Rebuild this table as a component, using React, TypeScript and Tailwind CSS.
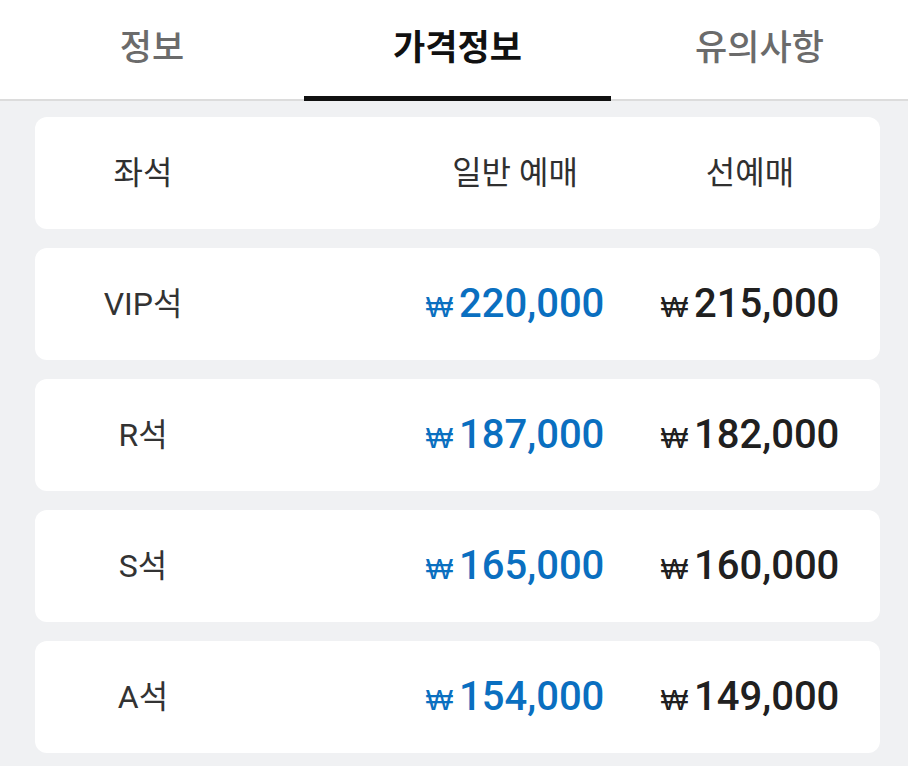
import React from "react";

const rows = [
  { seat: "VIP석", normal: "220,000", pre: "215,000" },
  { seat: "R석", normal: "187,000", pre: "182,000" },
  { seat: "S석", normal: "165,000", pre: "160,000" },
  { seat: "A석", normal: "154,000", pre: "149,000" },
];

const font = { fontFamily: '"Roboto", "Noto Sans CJK KR", sans-serif' };

function Price({ value, blue }: { value: string; blue?: boolean }) {
  return (
    <span
      className={`flex items-baseline justify-center ${blue ? "text-[#0a6fc0]" : "text-[#202020]"}`}
    >
      <span
        className="text-[29px] font-light mr-[6px]"
        style={{ fontFamily: '"DejaVu Sans", "Liberation Sans", sans-serif' }}
      >
        ₩
      </span>
      <span className="text-[40px] font-medium">{value}</span>
    </span>
  );
}

export default function App() {
  return (
    <div className="w-[908px] h-[766px] bg-[#f0f1f3] overflow-hidden" style={font}>
      <div className="bg-white h-[101px] flex border-b-[2px] border-[#dcdcdc]">
        <div className="w-[304px] flex items-center justify-center text-[35px] font-medium text-[#6b6b6b]">
          정보
        </div>
        <div className="w-[307px] flex items-center justify-center relative text-[35px] font-bold text-[#111]">
          가격정보
          <div className="absolute left-0 right-0 -bottom-[2px] h-[5px] bg-[#111]" />
        </div>
        <div className="flex-1 flex items-center justify-center text-[35px] font-medium text-[#6b6b6b]">
          유의사항
        </div>
      </div>

      <div className="pl-[35px] pr-[28px] pt-[16px] flex flex-col gap-[19px]">
        <div className="bg-white rounded-[12px] h-[112px] grid grid-cols-[216px_154px_220px_250px] items-center text-[32px] text-[#303030]">
          <span className="text-center">좌석</span>
          <span />
          <span className="text-center">일반 예매</span>
          <span className="text-center">선예매</span>
        </div>
        {rows.map((r) => (
          <div
            key={r.seat}
            className="bg-white rounded-[12px] h-[112px] grid grid-cols-[216px_154px_220px_250px] items-center"
          >
            <span className="text-center text-[32px] text-[#333]">{r.seat}</span>
            <span />
            <Price value={r.normal} blue />
            <Price value={r.pre} />
          </div>
        ))}
      </div>
    </div>
  );
}
